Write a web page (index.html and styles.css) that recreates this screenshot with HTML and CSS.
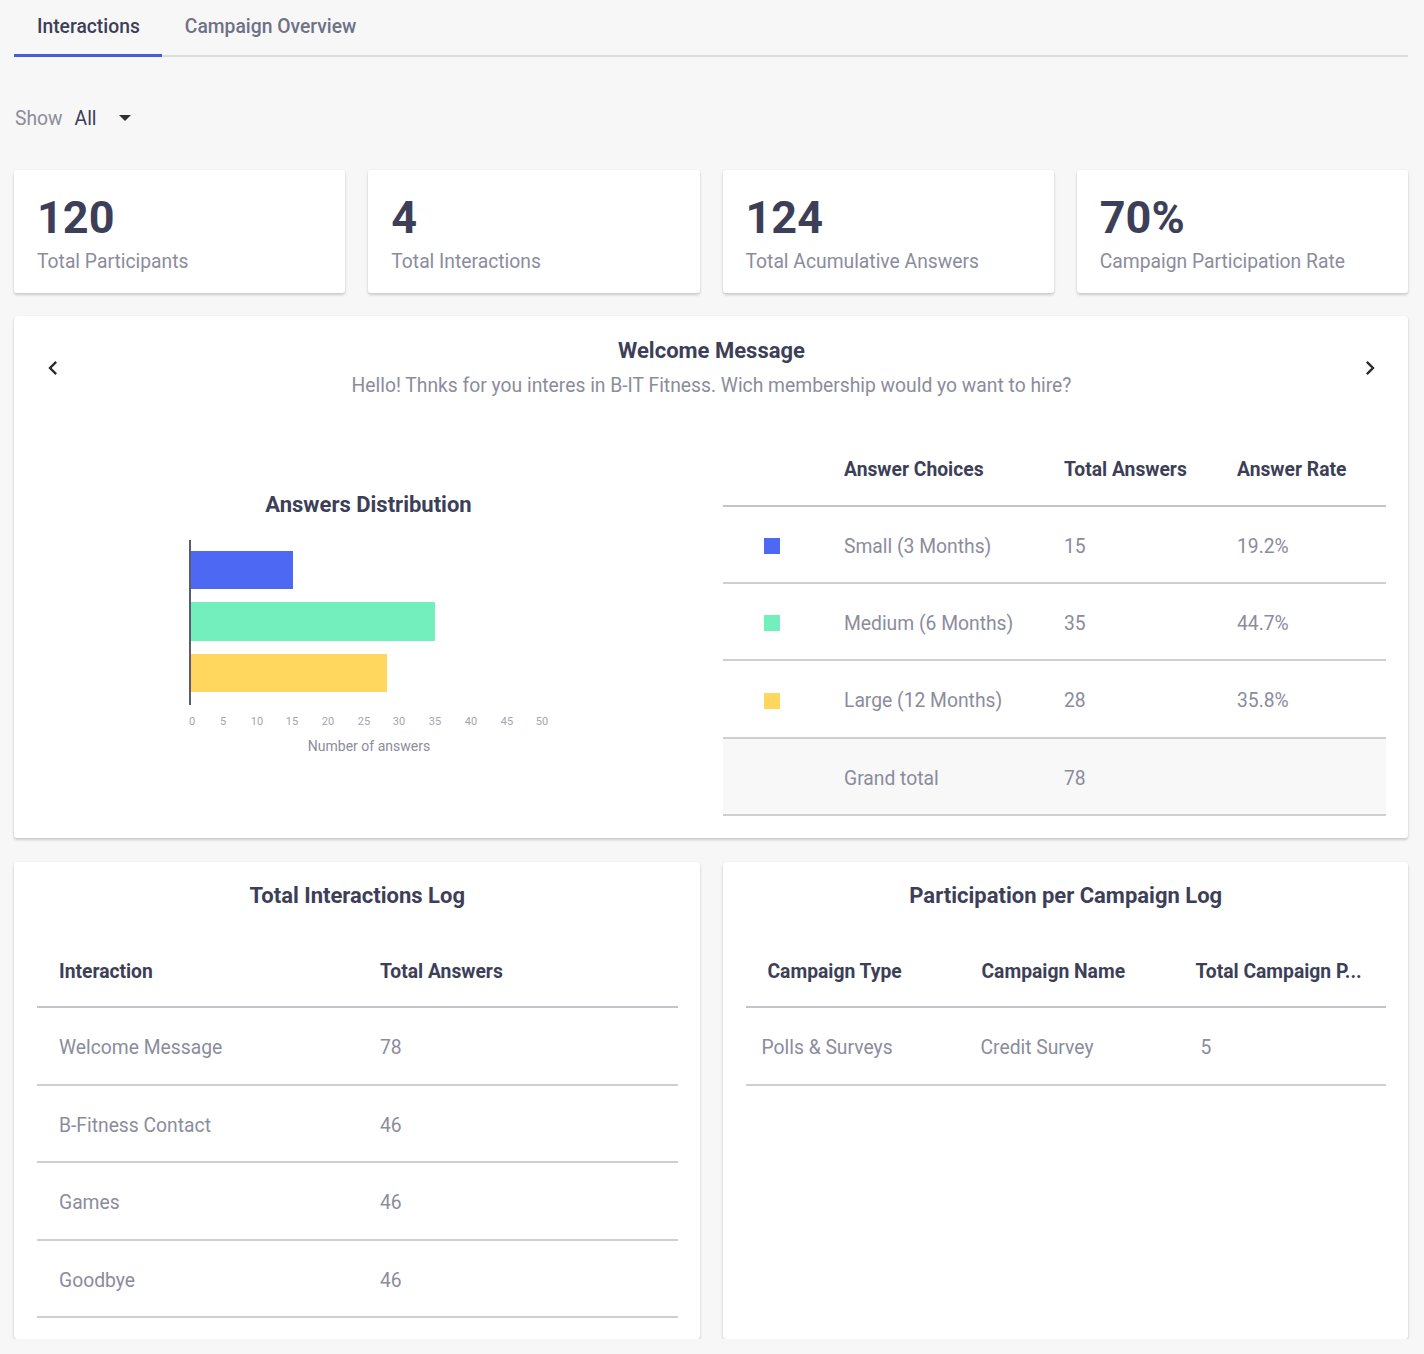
FILE: index.html
```html
<!DOCTYPE html>
<html lang="en">
<head>
<meta charset="utf-8">
<title>Interactions</title>
<link rel="stylesheet" href="styles.css">
</head>
<body>
<div class="page">
  <nav class="tabs">
    <div class="tab active">Interactions</div>
    <div class="tab">Campaign Overview</div>
  </nav>

  <div class="filter">
    <span class="filter-label">Show</span>
    <span class="filter-value">All</span>
    <span class="caret"></span>
  </div>

  <section class="stats">
    <div class="card stat"><div class="stat-num">120</div><div class="stat-label">Total Participants</div></div>
    <div class="card stat"><div class="stat-num">4</div><div class="stat-label">Total Interactions</div></div>
    <div class="card stat"><div class="stat-num">124</div><div class="stat-label">Total Acumulative Answers</div></div>
    <div class="card stat"><div class="stat-num">70%</div><div class="stat-label">Campaign Participation Rate</div></div>
  </section>

  <section class="card welcome">
    <div class="welcome-head">
      <span class="chev"><svg viewBox="0 0 24 24" width="28" height="28"><path d="M15.41 7.41L14 6l-6 6 6 6 1.41-1.41L10.83 12z" fill="#2b2b2f"/></svg></span>
      <div class="welcome-titles">
        <h2 class="card-title">Welcome Message</h2>
        <p class="welcome-sub">Hello! Thnks for you interes in B-IT Fitness. Wich membership would yo want to hire?</p>
      </div>
      <span class="chev"><svg viewBox="0 0 24 24" width="28" height="28"><path d="M8.59 16.59L10 18l6-6-6-6-1.41 1.41L13.17 12z" fill="#2b2b2f"/></svg></span>
    </div>
    <div class="welcome-body">
      <div class="chart">
        <h3 class="card-title chart-title">Answers Distribution</h3>
        <svg class="chart-svg" width="400" height="230" viewBox="0 0 400 230">
          <rect x="21" y="21" width="103" height="38" fill="#4d68f2"/>
          <rect x="21" y="72" width="245" height="39" fill="#73efbd"/>
          <rect x="21" y="124" width="197" height="38" fill="#ffd75e"/>
          <line x1="21" y1="10" x2="21" y2="175" stroke="#5b5c6c" stroke-width="2"/>
          <g font-family="Roboto, sans-serif" font-size="11" fill="#a3a4b3" text-anchor="middle">
            <text x="23" y="195">0</text>
            <text x="54" y="195">5</text>
            <text x="88" y="195">10</text>
            <text x="123" y="195">15</text>
            <text x="159" y="195">20</text>
            <text x="195" y="195">25</text>
            <text x="230" y="195">30</text>
            <text x="266" y="195">35</text>
            <text x="302" y="195">40</text>
            <text x="338" y="195">45</text>
            <text x="373" y="195">50</text>
          </g>
          <text x="200" y="221" font-family="Roboto, sans-serif" font-size="14" fill="#8b8c9c" text-anchor="middle">Number of answers</text>
        </svg>
      </div>
      <div class="answers">
        <div class="arow ahead">
          <span></span><span>Answer Choices</span><span>Total Answers</span><span>Answer Rate</span>
        </div>
        <div class="arow">
          <span><i class="swatch blue"></i></span><span>Small (3 Months)</span><span>15</span><span>19.2%</span>
        </div>
        <div class="arow">
          <span><i class="swatch green"></i></span><span>Medium (6 Months)</span><span>35</span><span>44.7%</span>
        </div>
        <div class="arow tall">
          <span><i class="swatch yellow"></i></span><span>Large (12 Months)</span><span>28</span><span>35.8%</span>
        </div>
        <div class="arow total">
          <span></span><span>Grand total</span><span>78</span><span></span>
        </div>
      </div>
    </div>
  </section>

  <section class="logs">
    <div class="card log">
      <h2 class="card-title">Total Interactions Log</h2>
      <div class="ltable two">
        <div class="lrow lhead"><span>Interaction</span><span>Total Answers</span></div>
        <div class="lrow"><span>Welcome Message</span><span>78</span></div>
        <div class="lrow"><span>B-Fitness Contact</span><span>46</span></div>
        <div class="lrow"><span>Games</span><span>46</span></div>
        <div class="lrow"><span>Goodbye</span><span>46</span></div>
      </div>
    </div>
    <div class="card log">
      <h2 class="card-title">Participation per Campaign Log</h2>
      <div class="ltable three">
        <div class="lrow lhead"><span>Campaign Type</span><span>Campaign Name</span><span>Total Campaign P...</span></div>
        <div class="lrow data"><span>Polls &amp; Surveys</span><span>Credit Survey</span><span>5</span></div>
      </div>
    </div>
  </section>
</div>
</body>
</html>
```

FILE: styles.css
```css
* { box-sizing: border-box; }

html, body {
  margin: 0;
  background: #f7f7f7;
  font-family: Roboto, "Liberation Sans", Arial, sans-serif;
  color: #3d3f58;
}

.page {
  width: 1394px;
  margin-left: 14px;
}

/* Tabs */
.tabs {
  display: flex;
  height: 57px;
  border-bottom: 2px solid #dcdcdf;
}
.tab {
  padding: 0 22px 0 23px;
  height: 57px;
  line-height: 54px;
  font-size: 19.3px;
  font-weight: 500;
  color: #6f7186;
  margin-bottom: -2px;
}
.tab.active {
  color: #3d3f58;
  border-bottom: 3px solid #4a5bd6;
}

/* Filter */
.filter {
  display: flex;
  align-items: center;
  height: 26px;
  margin-top: 48px;
  font-size: 19.3px;
}
.filter-label { color: #8b8c9c; margin-left: 1px; }
.filter-value { color: #3d3f58; margin-left: 12px; }
.caret {
  width: 0; height: 0;
  margin-left: 22px;
  border-left: 6.5px solid transparent;
  border-right: 6.5px solid transparent;
  border-top: 6.5px solid #2f3036;
}

/* Cards */
.card {
  background: #fff;
  border-radius: 3px;
  box-shadow: 0 2px 3px rgba(0,0,0,0.18), 0 0 2px rgba(0,0,0,0.05);
}

.stats {
  display: grid;
  grid-template-columns: repeat(4, 1fr);
  gap: 23px;
  margin-top: 39px;
}
.stat {
  height: 123px;
  padding: 22px 23px 0;
}
.stat-num {
  font-size: 45px;
  font-weight: 700;
  line-height: 52px;
  color: #3d3f58;
}
.stat-label {
  font-size: 19.3px;
  line-height: 22px;
  margin-top: 7px;
  color: #8b8c9c;
}

/* Welcome */
.welcome {
  margin-top: 23px;
  padding: 23px 22px 22px 0;
}
.welcome-head {
  display: flex;
  align-items: center;
  padding-left: 25px;
  padding-right: 2px;
}
.chev {
  width: 28px;
  height: 28px;
  display: flex;
}
.welcome-titles {
  flex: 1;
  text-align: center;
}
.card-title {
  margin: 0;
  font-size: 22px;
  line-height: 24px;
  font-weight: 700;
  color: #3d3f58;
  text-align: center;
}
.welcome-sub {
  margin: 12px 0 0;
  font-size: 19.3px;
  line-height: 22px;
  color: #8b8c9c;
}
.welcome-body {
  display: grid;
  grid-template-columns: 709px 1fr;
  margin-top: 35px;
}
.chart {
  display: flex;
  flex-direction: column;
  align-items: center;
}
.chart-title {
  margin-top: 61px;
}
.chart-svg {
  display: block;
  margin-top: 13px;
}

.arow {
  display: grid;
  grid-template-columns: 121px 220px 173px 1fr;
  align-items: center;
  height: 77px;
  padding-top: 3px;
  border-bottom: 2px solid #cfcfd2;
  font-size: 19.3px;
  color: #8b8c9c;
}
.arow.tall { height: 78px; }
.arow.ahead {
  height: 75px;
  padding-top: 1px;
  color: #3d3f58;
  font-size: 19.3px;
  font-weight: 700;
  border-bottom-color: #c4c4c8;
}
.arow.total { background: #f8f8f8; }
.swatch {
  display: block;
  width: 16px;
  height: 16px;
  margin-left: 41px;
}
.swatch.blue { background: #4d68f2; }
.swatch.green { background: #73efbd; }
.swatch.yellow { background: #ffd75e; }

/* Logs */
.logs {
  display: grid;
  grid-template-columns: 1fr 1fr;
  gap: 23px;
  margin-top: 24px;
}
.log {
  height: 477px;
  padding: 22px 22px 0 23px;
}
.ltable { margin-top: 25px; }
.lrow {
  display: grid;
  align-items: center;
  height: 77.5px;
  padding-top: 4px;
  border-bottom: 2px solid #cfcfd2;
  font-size: 19.3px;
  color: #8b8c9c;
}
.lrow.lhead {
  height: 75px;
  padding-top: 3px;
  color: #3d3f58;
  font-size: 19.3px;
  font-weight: 700;
  border-bottom-color: #c4c4c8;
}
.two .lrow { grid-template-columns: 321px 1fr; }
.two .lrow span { padding-left: 22px; }
.three .lrow { grid-template-columns: 214px 214px 1fr; }
.three .lhead span { padding-left: 22px; white-space: nowrap; }
.three .data span:nth-child(1) { padding-left: 16px; }
.three .data span:nth-child(2) { padding-left: 21px; }
.three .data span:nth-child(3) { padding-left: 27px; }
```
